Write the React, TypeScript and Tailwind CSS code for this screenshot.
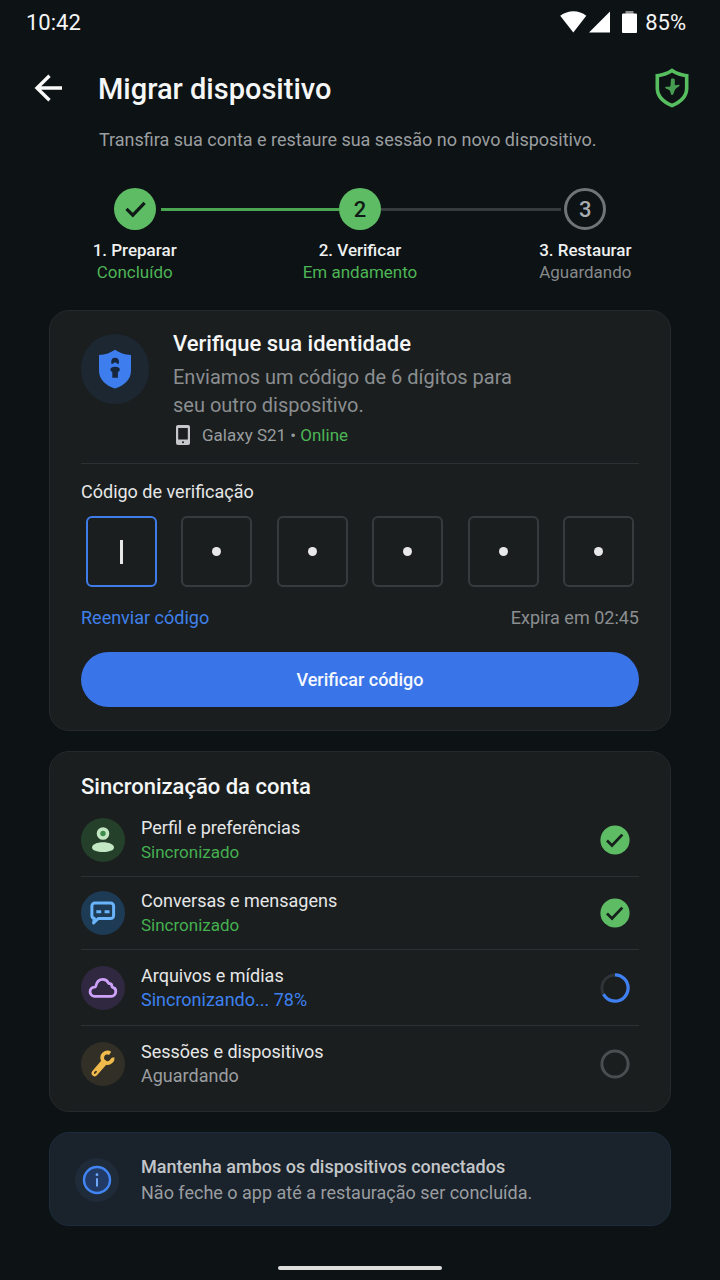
import { useState, type ReactNode } from "react";
import clsx from "clsx";

type StepState = "done" | "active" | "waiting";
type SyncState = "synced" | "syncing" | "waiting";

const STEPS: { label: string; status: string; state: StepState }[] = [
  { label: "1. Preparar", status: "Concluído", state: "done" },
  { label: "2. Verificar", status: "Em andamento", state: "active" },
  { label: "3. Restaurar", status: "Aguardando", state: "waiting" },
];

const SYNC_ITEMS: { title: string; status: string; state: SyncState; icon: ReactNode; iconBg: string }[] = [
  { title: "Perfil e preferências", status: "Sincronizado", state: "synced", icon: <PersonIcon />, iconBg: "bg-[#24402b]" },
  { title: "Conversas e mensagens", status: "Sincronizado", state: "synced", icon: <ChatIcon />, iconBg: "bg-[#1e3b55]" },
  { title: "Arquivos e mídias", status: "Sincronizando... 78%", state: "syncing", icon: <CloudIcon />, iconBg: "bg-[#2f2840]" },
  { title: "Sessões e dispositivos", status: "Aguardando", state: "waiting", icon: <WrenchIcon />, iconBg: "bg-[#322f26]" },
];

function PersonIcon() {
  return (
    <svg viewBox="0 0 44 44" className="size-11" aria-hidden="true">
      <circle cx="22" cy="15.500" r="4.500" fill="#3c8c4b" stroke="#c3e6c3" strokeWidth="3.600" />
      <path d="M11 29.500c0-3.200 5-5.300 11-5.300s11 2.100 11 5.300c0 2.800-5 4.500-11 4.500s-11-1.700-11-4.500z" fill="#c3e6c3" />
    </svg>
  );
}

function ChatIcon() {
  return (
    <svg viewBox="0 0 44 44" className="size-11" fill="none" aria-hidden="true">
      <path
        d="M14 11.900h15.600a3 3 0 0 1 3 3v9.600a3 3 0 0 1-3 3H17.200L12.600 32l.8-4.500c-1.400-.2-2.500-1.500-2.500-3v-9.600a3 3 0 0 1 3.100-3z"
        stroke="#69b4fa"
        strokeWidth="3"
        strokeLinejoin="round"
      />
      <path d="M15.300 20.800h4.900M23.600 20.800h4.900" stroke="#69b4fa" strokeWidth="3" />
    </svg>
  );
}

function CloudIcon() {
  return (
    <svg viewBox="0 0 44 44" className="size-11" fill="none" aria-hidden="true">
      <path
        d="M13.800 30.300a4.600 4.600 0 0 1-.3-9.200c.7 0 1.100-.4 1.300-1 .8-4 3.500-6.800 6.900-6.800 2.700 0 4.700 1.400 5.700 3.600.2.500.7.800 1.300.8 1.400.1 2.100.9 2.100 2.200 0 .8.300 1.300 1 1.500 2 .5 3 1.900 3 3.900 0 2.900-1.900 5-4.700 5z"
        stroke="#cfa2fa"
        strokeWidth="2.800"
        strokeLinejoin="round"
      />
    </svg>
  );
}

function WrenchIcon() {
  return (
    <svg viewBox="0 0 44 44" className="size-11" fill="none" aria-hidden="true">
      <path d="M22.600 20.800 13.800 31" stroke="#f0ba4c" strokeWidth="6.400" strokeLinecap="round" />
      <path d="M29.200 11.300a5.300 5.300 0 1 0 2.500 4.200" stroke="#f0ba4c" strokeWidth="3.800" />
      <path d="m25.800 15.500 3.200-3 2.600 2.500-3.200 3z" fill="#322f26" />
      <path d="m15 29.600-1.200 1.400" stroke="#3a3426" strokeWidth="1.800" strokeLinecap="round" />
    </svg>
  );
}

function IdentityIcon() {
  return (
    <svg viewBox="0 0 34 40" className="h-10 w-[34px]" aria-hidden="true">
      <path d="M17 .7c4.500 3.100 9.500 5 16 5.400v15.400c0 9-6.500 15-16 18-9.500-3-16-9-16-18V6.100C7.500 5.700 12.500 3.800 17 .7z" fill="#3d7dee" />
      <path d="M13.300 14.800v-2.300a3.800 3.800 0 0 1 7.600 0v2.300h-1.900c-.1-.9-.8-1.400-1.900-1.400s-1.800.5-1.900 1.400z" fill="#17263a" />
      <path d="M12.400 20.600c0-2 2-2.900 4.700-2.900s4.700.9 4.700 2.900c0 1.300-.8 2-1.900 2.600v5.500h-5.600v-5.500c-1.100-.6-1.900-1.300-1.900-2.600z" fill="#17263a" />
    </svg>
  );
}

function SyncIndicator({ state }: { state: SyncState }) {
  if (state === "synced") {
    return (
      <svg viewBox="0 0 30 30" className="size-[30px]" fill="none" aria-hidden="true">
        <circle cx="15" cy="15" r="14.600" fill="#5ebd64" />
        <path d="m7 15.500 5 4.900 10.300-10.800" stroke="#16211c" strokeWidth="2.800" />
      </svg>
    );
  }
  return (
    <svg viewBox="0 0 30 30" className="size-[30px] -rotate-90" fill="none" aria-hidden="true">
      <circle cx="15" cy="15" r="13.100" stroke={state === "syncing" ? "#2f3438" : "#4a4e50"} strokeWidth="3" />
      {state === "syncing" && (
        <circle cx="15" cy="15" r="13.100" stroke="#3f80f2" strokeWidth="3.200" pathLength={100} strokeDasharray="67 100" />
      )}
    </svg>
  );
}

function StatusBar() {
  return (
    <div className="flex h-[46px] items-center justify-between pr-[34px] pl-[26px] text-[22px] leading-7 text-[#f4f5f5]">
      <span>10:42</span>
      <div className="flex items-center">
        <svg viewBox="0 0 80 24" className="h-6 w-20" aria-hidden="true">
          <path d="M.2 4.700C8-1.300 19-1.300 26.300 4.700L13.300 21.500z" fill="#fff" />
          <path d="M50 .5v21H29z" fill="#fff" />
          <path d="M65.500 0h8v3h-8z" fill="#8d9091" />
          <rect x="62" y="2.500" width="15" height="19.500" rx="1" fill="#fff" />
        </svg>
        <span className="ml-[5px]">85%</span>
      </div>
    </div>
  );
}

function Header() {
  return (
    <header>
      <div className="mt-[18px] flex h-12 items-center pr-[31px] pl-[34px]">
        <button type="button" aria-label="Voltar" className="flex w-16 items-center">
          <svg viewBox="0 0 30 30" className="size-[30px]" fill="none" stroke="#fafafa" strokeWidth="3.400" aria-hidden="true">
            <path d="M28 15H3M15.500 2.800 3 15l12.500 12.200" />
          </svg>
        </button>
        <h1 className="flex-1 pt-0.5 text-[29px] leading-9 font-medium text-[#f5f6f6]">Migrar dispositivo</h1>
        <svg viewBox="0 0 34 40" className="h-10 w-[34px]" fill="none" aria-hidden="true">
          <path
            d="M17 2.500c4.300 2.800 9 4.700 14.700 5.200v12.300c0 8.300-6 14-14.700 17.500C8.300 34 2.300 28.300 2.300 20V7.700C8 7.200 12.700 5.300 17 2.500z"
            stroke="#57be60"
            strokeWidth="3.600"
          />
          <path d="M16.600 10.500c1.300-.3 3.200.1 3.200 1.200v5.400c1.400.3 4.600-1 4.800.2.100 1.100-3.500 2.900-4.500 4.200-.9 1.400-1.400 5.500-2.900 5.500s-1.600-3.600-2.500-4.600c-1.100-1.100-4.600-1.900-4.500-3 .2-1.100 3.700-.2 4.800-.9 1.300-.9.200-7.700 1.600-8z" fill="#479d51" />
        </svg>
      </div>
      <p className="mt-4 px-[99px] text-[18px] leading-6 whitespace-nowrap text-[#9b9ea0]">
        Transfira sua conta e restaure sua sessão no novo dispositivo.
      </p>
    </header>
  );
}

function StepCircle({ state, number }: { state: StepState; number: number }) {
  if (state === "done") {
    return (
      <span className="flex size-[42px] items-center justify-center rounded-full bg-[#5ebd64]">
        <svg viewBox="0 0 42 42" className="size-[42px]" fill="none" aria-hidden="true">
          <path d="m12.500 20.800 6.300 6.300 11.800-12.300" stroke="#101a16" strokeWidth="3.200" />
        </svg>
      </span>
    );
  }
  return (
    <span
      className={clsx(
        "flex size-[42px] items-center justify-center rounded-full pt-0.5 text-[22px] leading-none font-medium",
        state === "active" ? "bg-[#5ebd64] text-[#101a16]" : "border-3 border-[#707476] text-[#a9adaf]",
      )}
    >
      {number}
    </span>
  );
}

function Stepper() {
  return (
    <ol className="mt-9 grid grid-cols-3 px-[22px]">
      {STEPS.map((step, i) => (
        <li key={step.label} className="flex flex-col items-center">
          <div className="flex w-full items-center">
            <span
              className={clsx(
                "h-[3px] flex-1",
                step.state === "done" && "mr-[5px]",
                step.state === "active" && "bg-[#4aa653]",
                step.state === "waiting" && "mr-[3px] bg-[#363b3e]",
              )}
            />
            <StepCircle state={step.state} number={i + 1} />
            <span
              className={clsx(
                "h-[3px] flex-1",
                step.state === "done" && "ml-[5px] bg-[#4aa653]",
                step.state === "active" && "bg-[#363b3e]",
                step.state === "waiting" && "ml-[3px]",
              )}
            />
          </div>
          <span className="mt-[9px] text-[17px] leading-[22px] font-medium text-[#eff0f0]">{step.label}</span>
          <span className={clsx("text-[17px] leading-[22px]", step.state === "waiting" ? "text-[#85898b]" : "text-[#4db556]")}>
            {step.status}
          </span>
        </li>
      ))}
    </ol>
  );
}

function CodeInputs() {
  const [digits, setDigits] = useState<string[]>(["", "", "", "", "", ""]);

  function setDigit(index: number, value: string) {
    setDigits((prev) => prev.map((d, i) => (i === index ? value.replace(/\D/g, "").slice(-1) : d)));
  }

  return (
    <div className="mt-3 flex justify-between px-[5px]">
      {digits.map((digit, i) => (
        <div key={i} className="relative size-[71px]">
          <input
            id={`code-${i}`}
            type="text"
            inputMode="numeric"
            aria-label={i === 0 ? undefined : `Dígito ${i + 1}`}
            value={digit}
            onChange={(e) => setDigit(i, e.target.value)}
            className={clsx(
              "size-full rounded-md border-2 bg-transparent text-center text-2xl text-white caret-transparent outline-none",
              i === 0 ? "border-[#3f7ce8]" : "border-[#373b3e]",
            )}
          />
          {!digit && (
            <span
              aria-hidden="true"
              className={clsx(
                "pointer-events-none absolute inset-0 m-auto bg-[#e8e8e9]",
                i === 0 ? "h-6 w-[3px]" : "size-[9px] rounded-full",
              )}
            />
          )}
        </div>
      ))}
    </div>
  );
}

function IdentityCard() {
  return (
    <section className="mx-[49px] mt-[27px] rounded-[20px] border border-[#25292b] bg-[#1a1e1f] px-[31px] pt-[19px] pb-[23px]">
      <div className="flex items-start">
        <div className="mt-1 flex h-[70px] w-[68px] shrink-0 items-center justify-center rounded-full bg-[#1c2732]">
          <IdentityIcon />
        </div>
        <div className="ml-6 flex-1">
          <h2 className="text-[22px] leading-7 font-medium text-[#f5f6f6]">Verifique sua identidade</h2>
          <p className="mt-[5px] max-w-[370px] text-[20px] leading-7 text-[#8b8e90]">
            Enviamos um código de 6 dígitos para seu outro dispositivo.
          </p>
          <p className="mt-1 flex items-center text-[17px] leading-6 text-[#999c9e]">
            <svg viewBox="0 0 14 20" className="mr-3 ml-[3px] h-5 w-[14px]" aria-hidden="true">
              <path d="M2 0h10a2 2 0 0 1 2 2v16a2 2 0 0 1-2 2H2a2 2 0 0 1-2-2V2a2 2 0 0 1 2-2zm.2 3v11.500h9.600V3z" fill="#c6c7ca" fillRule="evenodd" />
              <circle cx="7" cy="17.200" r="1" fill="#1a1e1f" />
            </svg>
            <span>
              Galaxy S21 • <span className="text-[#4db556]">Online</span>
            </span>
          </p>
        </div>
      </div>

      <hr className="mt-4 border-[#2d3133]" />

      <label htmlFor="code-0" className="mt-4 block text-[18px] leading-6 text-[#e6e7e7]">
        Código de verificação
      </label>
      <CodeInputs />

      <div className="mt-[19px] flex justify-between text-[18px] leading-6">
        <a href="#reenviar" className="text-[#4080ea]">Reenviar código</a>
        <span className="text-[#8b8e90]">Expira em 02:45</span>
      </div>

      <button type="button" className="mt-[22px] h-[55px] w-full rounded-full bg-[#3975e8] text-[18px] font-medium text-[#f5f8ff]">
        Verificar código
      </button>
    </section>
  );
}

function SyncCard() {
  return (
    <section className="mx-[49px] mt-5 rounded-[20px] border border-[#25292b] bg-[#1a1e1f] px-[31px] pt-[21px] pb-[9px]">
      <h2 className="text-[22px] leading-7 font-medium text-[#f5f6f6]">Sincronização da conta</h2>
      <ul className="mt-[3px] divide-y divide-[#2d3133]">
        {SYNC_ITEMS.map((item) => (
          <li key={item.title} className={clsx("flex items-center pr-[9px]", item.state === "synced" ? "h-[73px]" : "h-[76px]")}>
            <div className={clsx("size-11 shrink-0 rounded-full", item.iconBg)}>{item.icon}</div>
            <div className="ml-4 flex-1 text-[18px] leading-6">
              <p className="text-[#e6e7e7]">{item.title}</p>
              <p
                className={clsx(
                  item.state === "synced" && "text-[17px] text-[#45b04f]",
                  item.state === "syncing" && "text-[#3d80ee]",
                  item.state === "waiting" && "text-[#9b9ea0]",
                )}
              >
                {item.status}
              </p>
            </div>
            <SyncIndicator state={item.state} />
          </li>
        ))}
      </ul>
    </section>
  );
}

function InfoCard() {
  return (
    <section className="mx-[49px] mt-5 flex items-center rounded-[20px] border border-[#1d2c3c] bg-[#1a222b] pt-[21px] pb-[19px] pl-[25px]">
      <div className="flex size-11 shrink-0 items-center justify-center rounded-full bg-[#1f2b38]">
        <svg viewBox="0 0 30 30" className="size-[30px]" fill="none" aria-hidden="true">
          <circle cx="15" cy="15" r="13" fill="#213a66" stroke="#4286f6" strokeWidth="2.400" />
          <path d="M15 13.200v8.300" stroke="#6ea9fb" strokeWidth="2" />
          <circle cx="15" cy="9.700" r="1.400" fill="#6ea9fb" />
        </svg>
      </div>
      <div className="ml-[22px] text-[18px] leading-[26px]">
        <p className="font-medium text-[#c3c6c9]">Mantenha ambos os dispositivos conectados</p>
        <p className="text-[#9a9da0]">Não feche o app até a restauração ser concluída.</p>
      </div>
    </section>
  );
}

export default function App() {
  return (
    <main className="flex min-h-screen flex-col bg-[#0d1214] font-[Roboto,'Liberation_Sans',sans-serif]">
      <StatusBar />
      <Header />
      <Stepper />
      <IdentityCard />
      <SyncCard />
      <InfoCard />
      <div className="mx-auto mt-auto mb-[10px] h-1 w-[164px] rounded-full bg-[#dedede]" />
    </main>
  );
}
